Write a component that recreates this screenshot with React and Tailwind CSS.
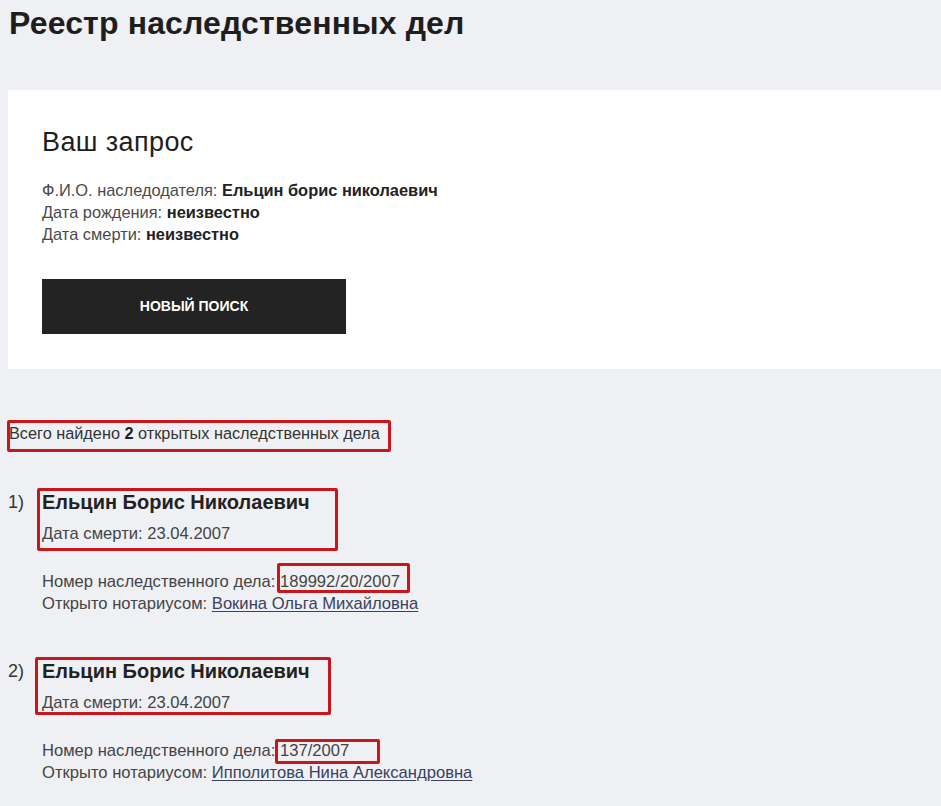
import React from "react";

const cases = [
  {
    num: "1)",
    name: "Ельцин Борис Николаевич",
    death: "23.04.2007",
    caseNo: "189992/20/2007",
    notary: "Вокина Ольга Михайловна",
    nameBox: "-left-[5px] -top-[2px] w-[301px] h-[63px]",
    noBox: "-left-[3px] -top-[9px] w-[133px] h-[30px]",
  },
  {
    num: "2)",
    name: "Ельцин Борис Николаевич",
    death: "23.04.2007",
    caseNo: "137/2007",
    notary: "Ипполитова Нина Александровна",
    nameBox: "-left-[7px] -top-[2px] w-[296px] h-[58px]",
    noBox: "-left-[5px] -top-[2px] w-[105px] h-[25px]",
  },
];

const CaseItem = ({ item, first }) => (
  <div className={`flex ${first ? "mt-[46px]" : "mt-[44px]"}`}>
    <div className="w-[42px] shrink-0 pl-[8px] text-[18px] leading-[24px] text-[#333]">{item.num}</div>
    <div>
      <div className="relative">
        <div className="text-[20px] leading-[24px] font-bold text-[#222]">{item.name}</div>
        <div className="mt-[9px] text-[16.6px] leading-[22px] text-[#444]">
          Дата смерти: {item.death}
        </div>
        <span className={`absolute ${item.nameBox} border-[3px] border-[#c8161d] rounded-[2px]`}></span>
      </div>
      <div className="mt-[26px] text-[16.6px] leading-[22px] text-[#444]">
        Номер наследственного дела:{" "}
        <span className="relative">
          {item.caseNo}
          <span className={`absolute ${item.noBox} border-[3px] border-[#c8161d] rounded-[2px]`}></span>
        </span>
      </div>
      <div className="text-[16.6px] leading-[22px] text-[#444]">
        Открыто нотариусом:{" "}
        <a href="#" className="text-[#38425e] underline underline-offset-2">
          {item.notary}
        </a>
      </div>
    </div>
  </div>
);

const App = () => {
  return (
    <div className="min-h-screen bg-[#eff0f4] pb-10 font-['Liberation_Sans',Arial,sans-serif] overflow-hidden">
      <h1 className="pt-[4px] pl-[9px] text-[32px] leading-[38px] font-semibold tracking-[0.15px] text-[#1e1e1e]">
        Реестр наследственных дел
      </h1>

      <div className="ml-[8px] mt-[48px] bg-white pl-[34px] pt-[36px] pb-[35px]">
        <h2 className="text-[27px] leading-[32px] tracking-[0.4px] text-[#1e1e1e]">Ваш запрос</h2>
        <div className="mt-[21px] text-[16.4px] leading-[22px] text-[#4a4a4a]">
          <div>
            Ф.И.О. наследодателя: <b className="text-[#222]">Ельцин борис николаевич</b>
          </div>
          <div>
            Дата рождения: <b className="text-[#222]">неизвестно</b>
          </div>
          <div>
            Дата смерти: <b className="text-[#222]">неизвестно</b>
          </div>
        </div>
        <button className="mt-[34px] w-[304px] h-[55px] bg-[#232323] text-white text-[14px] font-bold">
          НОВЫЙ ПОИСК
        </button>
      </div>

      <div className="mt-[53px] pl-[9px] text-[16.3px] leading-[22px] text-[#333]">
        <span className="relative">
          Всего найдено <b className="text-[#222]">2</b> открытых наследственных дела
          <span className="absolute -left-[2px] -top-[4px] w-[384px] h-[32px] border-[3px] border-[#c8161d] rounded-[2px]"></span>
        </span>
      </div>

      {cases.map((item, i) => (
        <CaseItem key={i} item={item} first={i === 0} />
      ))}
    </div>
  );
};

export default App;
